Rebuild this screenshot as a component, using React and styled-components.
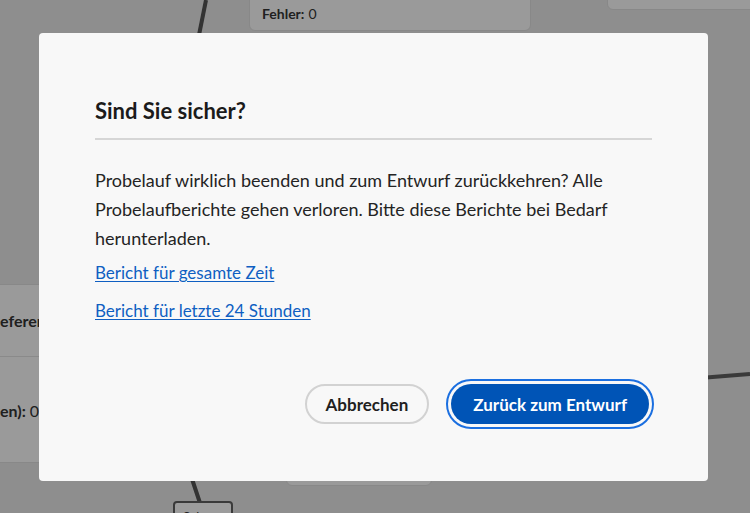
import React from "react";
import styled, { createGlobalStyle } from "styled-components";

const GlobalStyle = createGlobalStyle`
  html, body {
    margin: 0;
    padding: 0;
    background: #8e8e8e;
  }
  body {
    font-family: "Lato", "Open Sans", sans-serif;
  }
`;

const Canvas = styled.div`
  position: relative;
  width: 750px;
  height: 513px;
  overflow: hidden;
  background: #8e8e8e;
`;

const Wires = styled.svg`
  position: absolute;
  inset: 0;
`;

const Node = styled.div`
  position: absolute;
  box-sizing: border-box;
  background: #9a9a9a;
  border: 1px solid #888888;
  border-radius: 6px;
  color: #202020;
  font-size: 14px;
  font-family: "Lato", sans-serif;
  overflow: hidden;
`;

const NodeRow = styled.div`
  display: flex;
  align-items: center;
  height: ${(p) => p.$h}px;
  padding: 0 ${(p) => p.$pad || 0}px;
  font-size: ${(p) => p.$size || 14}px;
  border-bottom: ${(p) => (p.$line ? "1px solid #8a8a8a" : "none")};
  white-space: nowrap;
  gap: 4px;

  b {
    font-weight: 700;
  }
`;

const Tag = styled.div`
  position: absolute;
  box-sizing: border-box;
  background: #9c9c9c;
  border: 2px solid #3a3a3a;
  border-radius: 4px;
  font-size: 13px;
  padding: 6px 8px;
  color: #202020;
`;

const Overlay = styled.div`
  position: absolute;
  inset: 0;
  display: flex;
  align-items: flex-start;
  justify-content: flex-start;
  padding: 33px 0 0 39px;
  box-sizing: border-box;
`;

const Dialog = styled.div`
  width: 669px;
  height: 448px;
  box-sizing: border-box;
  background: #f8f8f8;
  border-radius: 4px;
  padding: 65px 56px 0 56px;
  display: flex;
  flex-direction: column;
  color: #222;
`;

const Title = styled.h2`
  margin: 0;
  font-size: 22px;
  font-weight: 700;
  line-height: 26px;
  color: #1b1b1b;
  padding-bottom: 14px;
  border-bottom: 2px solid #d6d6d6;
`;

const Body = styled.p`
  margin: 26px 0 0;
  font-size: 18px;
  line-height: 29px;
  color: #242424;
`;

const Links = styled.div`
  display: flex;
  flex-direction: column;
  gap: 9px;
  margin-top: 5px;
`;

const Link = styled.a`
  font-size: 17px;
  line-height: 29px;
  color: #0f5fc2;
  text-decoration: underline;
  text-underline-offset: 2px;
  cursor: pointer;
  align-self: flex-start;
`;

const Footer = styled.div`
  margin-top: auto;
  margin-bottom: 57px;
  margin-right: 3px;
  display: flex;
  justify-content: flex-end;
  align-items: center;
  gap: 22px;
`;

const Button = styled.button`
  height: 40px;
  box-sizing: border-box;
  border-radius: 20px;
  font-family: "Lato", sans-serif;
  font-size: 17px;
  font-weight: 700;
  padding: 0 19px;
  cursor: pointer;

  &.secondary {
    background: #f8f8f8;
    color: #1f1f1f;
    border: 2px solid #d2d2d2;
  }

  &.primary {
    background: #0054b6;
    color: #ffffff;
    border: none;
    padding: 0 22px;
    outline: 2px solid #1b6fe0;
    outline-offset: 3px;
  }
`;

function Background() {
  return (
    <Canvas>
      <Wires width="750" height="513">
        <line x1="206" y1="0" x2="198" y2="40" stroke="#333" strokeWidth="4" />
        <line x1="191" y1="476" x2="200" y2="503" stroke="#333" strokeWidth="4" />
        <line x1="700" y1="378" x2="750" y2="374" stroke="#3a3a3a" strokeWidth="4" />
      </Wires>
      <Node style={{ left: 249, top: -20, width: 282, height: 51 }}>
        <NodeRow $h={64} $pad={12}>
          <b>Fehler:</b> 0
        </NodeRow>
      </Node>
      <Node style={{ left: 607, top: -20, width: 160, height: 30 }} />
      <Node style={{ left: -8, top: 284, width: 120, height: 179 }}>
        <NodeRow $h={71} $line $pad={7} $size={16}>
          <b>eferenz</b>
        </NodeRow>
        <NodeRow $h={106} $pad={7} $size={16}>
          <b>en):</b> 0
        </NodeRow>
      </Node>
      <Node style={{ left: 286, top: 440, width: 146, height: 46 }} />
      <Tag style={{ left: 173, top: 501, width: 60, height: 30 }}>Sch</Tag>
    </Canvas>
  );
}

export default function App() {
  return (
    <>
      <GlobalStyle />
      <div style={{ position: "relative", width: 750, height: 513 }}>
        <Background />
        <Overlay>
          <Dialog role="dialog">
            <Title>Sind Sie sicher?</Title>
            <Body>
              Probelauf wirklich beenden und zum Entwurf zurückkehren? Alle
              Probelaufberichte gehen verloren. Bitte diese Berichte bei Bedarf
              herunterladen.
            </Body>
            <Links>
              <Link>Bericht für gesamte Zeit</Link>
              <Link>Bericht für letzte 24 Stunden</Link>
            </Links>
            <Footer>
              <Button className="secondary">Abbrechen</Button>
              <Button className="primary">Zurück zum Entwurf</Button>
            </Footer>
          </Dialog>
        </Overlay>
      </div>
    </>
  );
}
